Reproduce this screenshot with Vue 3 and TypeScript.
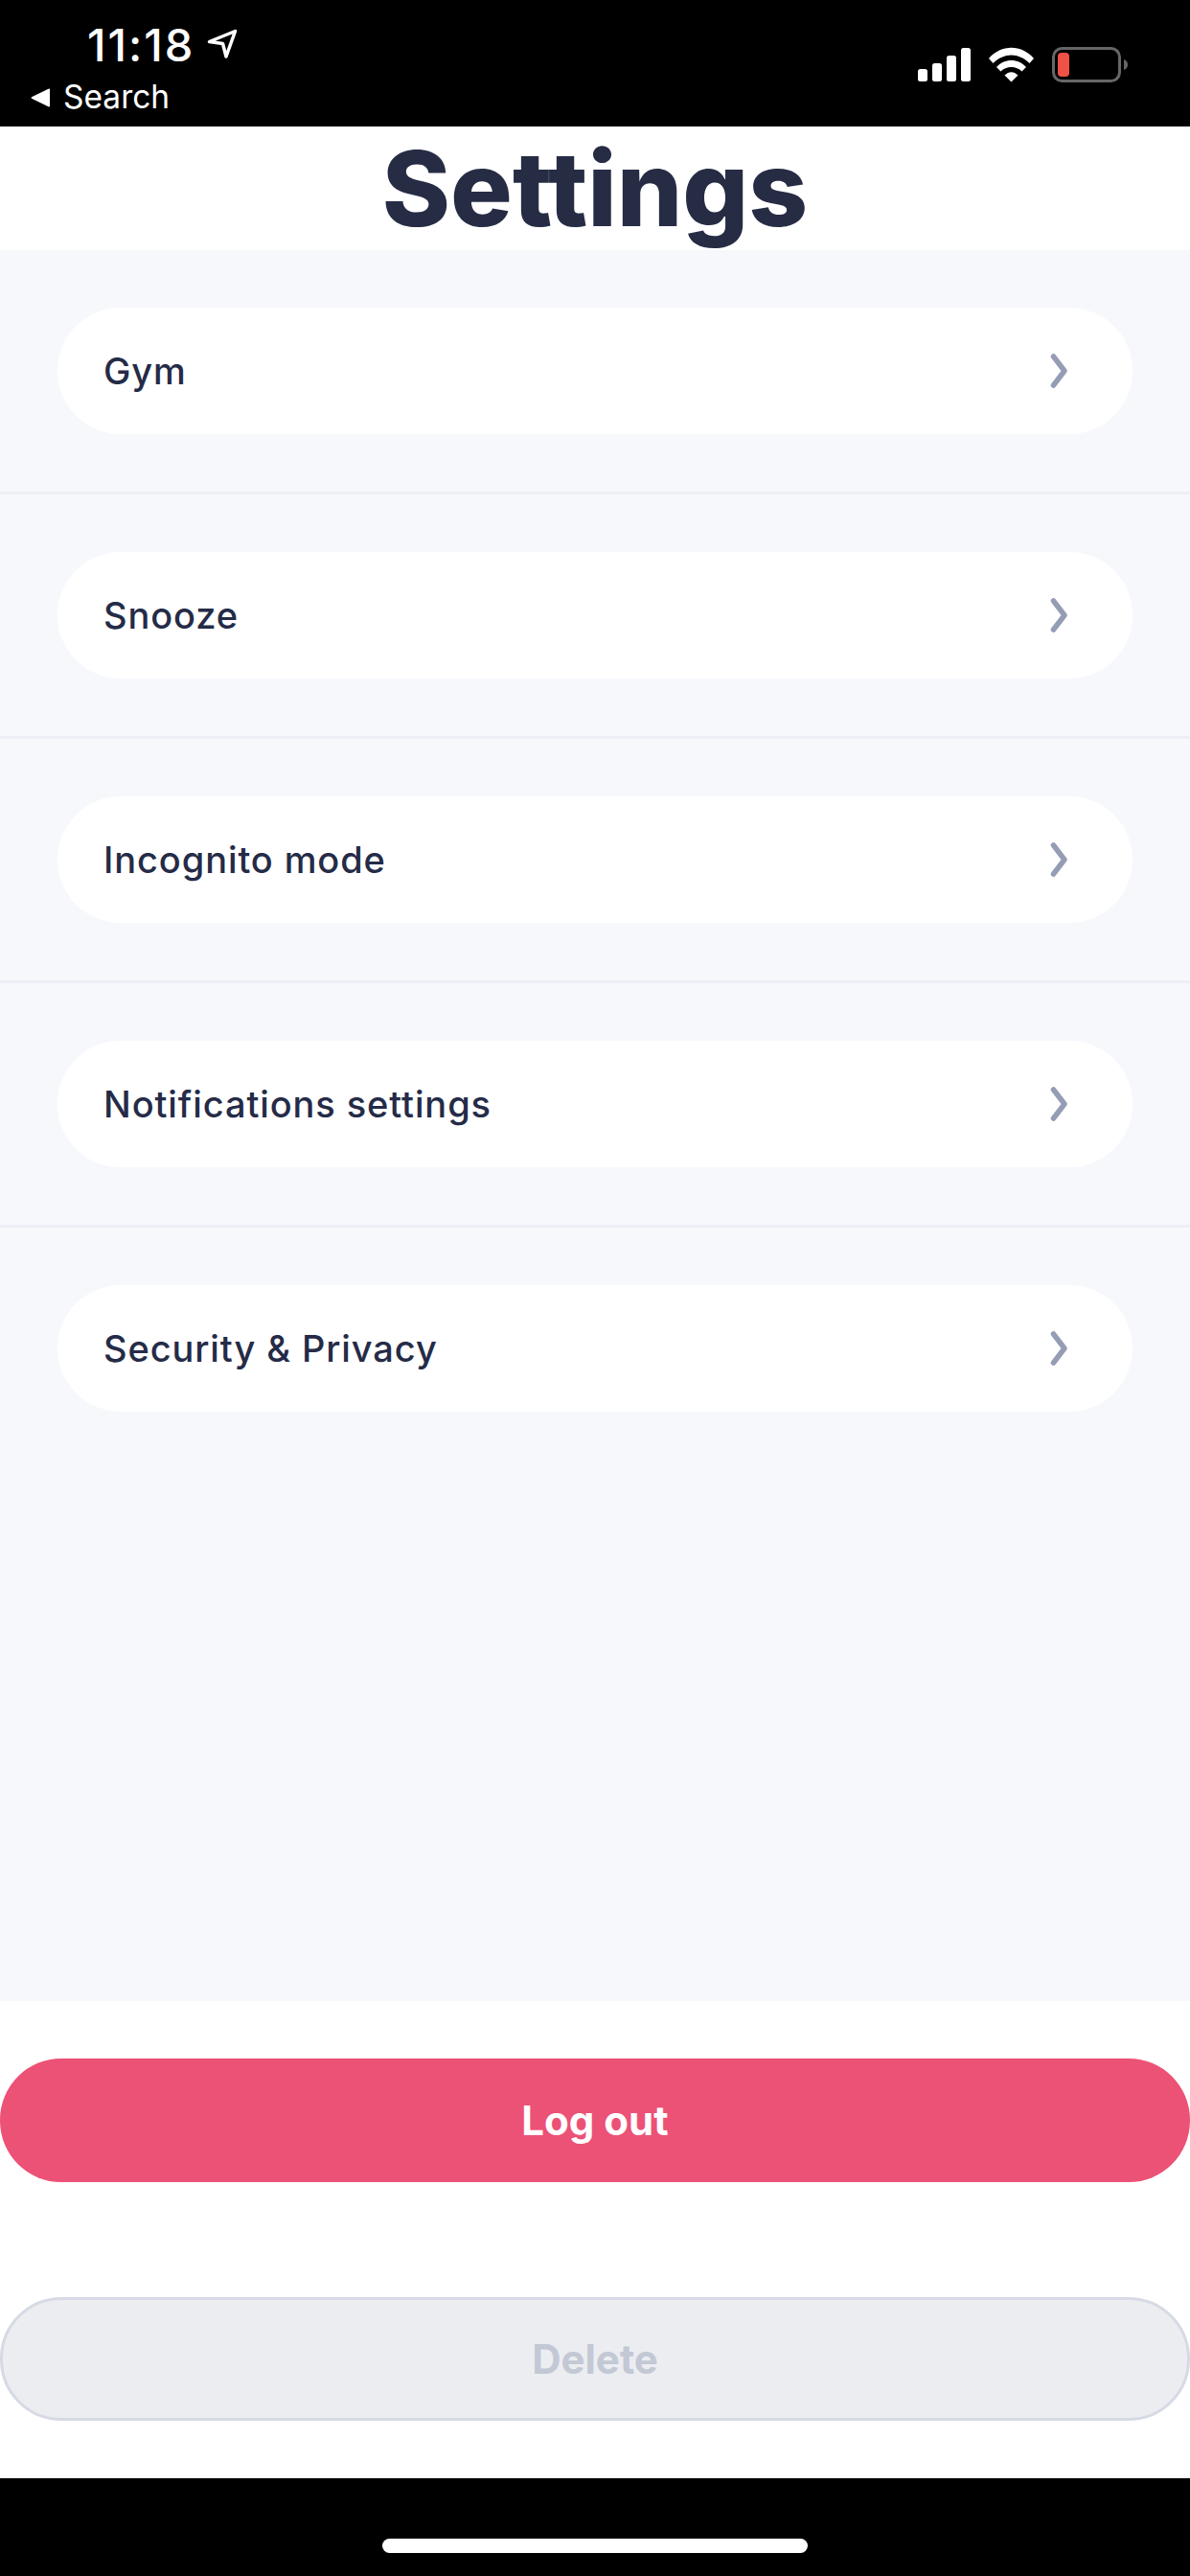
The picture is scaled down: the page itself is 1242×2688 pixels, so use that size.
<template>
	<div class="screen">
		<div class="status-bar">
			<div class="status-left">
				<div class="time-row">
					<span class="time">11:18</span>
					<svg class="location" width="32" height="32" viewBox="0 0 32 32">
						<path d="M29.500 2.500 L2.500 13.500 L16.500 15.500 L20 29 Z" fill="none" stroke="#fff" stroke-width="3.500" stroke-linejoin="round" />
					</svg>
				</div>
				<div class="back-row">
					<svg width="21" height="20" viewBox="0 0 21 20">
						<path d="M20 1.500 V18.500 Q20 20 18.500 19.200 L1 10.800 Q0 10 1 9.200 L18.500 .8 Q20 0 20 1.500 Z" fill="#fff" />
					</svg>
					<span>Search</span>
				</div>
			</div>
			<svg class="status-right" width="220" height="38" viewBox="0 0 220 38">
				<rect x="0" y="23" width="10" height="13" rx="2.500" fill="#fff" />
				<rect x="15" y="17" width="10" height="19" rx="2.500" fill="#fff" />
				<rect x="30" y="9" width="10" height="27" rx="2.500" fill="#fff" />
				<rect x="45" y="1" width="10" height="35" rx="2.500" fill="#fff" />
				<path d="M74 12 C87 -3 108 -3 121 12 L116.500 17 C105 5.500 90 5.500 78.500 17 Z" fill="#fff" />
				<path d="M82 21 C90 11.500 105 11.500 113 21 L108.500 25.500 C103 19.500 92 19.500 86.500 25.500 Z" fill="#fff" />
				<path d="M90.500 29.500 C95 25 100 25 104.500 29.500 L97.500 36.500 Z" fill="#fff" />
				<rect x="141.500" y="1.500" width="69" height="34" rx="9" fill="none" stroke="#666" stroke-width="3" />
				<rect x="146" y="6" width="12" height="25" rx="4" fill="#ee5246" />
				<path d="M215 13 C218 14 219 16 219 18.500 C219 21 218 23 215 24 Z" fill="#666" />
			</svg>
		</div>

		<header class="page-header">
			<h1>Settings</h1>
		</header>

		<main class="settings-list">
			<div v-for="item in items" :key="item" class="settings-row">
				<div class="settings-item">
					<span>{{ item }}</span>
					<svg width="18" height="36" viewBox="0 0 18 36">
						<path d="M3.500 3 L15 18 L3.500 33" fill="none" stroke="#959db5" stroke-width="5.500" stroke-linecap="round" stroke-linejoin="round" />
					</svg>
				</div>
			</div>
		</main>

		<div class="actions">
			<button class="btn btn-logout">Log out</button>
			<button class="btn btn-delete">Delete</button>
		</div>

		<div class="home-area">
			<div class="home-bar"></div>
		</div>
	</div>
</template>

<script setup lang="ts">
const items: string[] = [
	'Gym',
	'Snooze',
	'Incognito mode',
	'Notifications settings',
	'Security & Privacy',
];
</script>

<style scoped>
.screen {
	width: 1242px;
	height: 2688px;
	display: flex;
	flex-direction: column;
	background-color: #fff;
	font-family: Inter, "Liberation Sans", sans-serif;
	overflow: hidden;
}

.status-bar {
	height: 132px;
	flex-shrink: 0;
	background-color: #000;
	color: #fff;
	display: flex;
	justify-content: space-between;
	box-sizing: border-box;
	padding: 0 64px 0 32px;
}

.status-left {
	display: flex;
	flex-direction: column;
}

.time-row {
	display: flex;
	align-items: center;
	height: 80px;
	padding: 12px 0 0 59px;
	box-sizing: border-box;
}

.time {
	font-size: 47px;
	font-weight: 500;
	letter-spacing: 2px;
	line-height: 1;
}

.location {
	margin-left: 13px;
}

.back-row {
	display: flex;
	align-items: center;
	gap: 13px;
	font-size: 33.5px;
	line-height: 1;
	height: 44px;
}

.status-right {
	margin-top: 49px;
}

.page-header {
	height: 129px;
	flex-shrink: 0;
	display: flex;
	align-items: center;
	justify-content: center;
}

.page-header h1 {
	margin: 0;
	font-size: 108px;
	font-weight: 800;
	line-height: 1;
	color: #272c45;
}

.settings-list {
	flex: 1;
	background-color: #f6f8fc;
}

.settings-row {
	padding: 60px;
	border-bottom: 3px solid #eeeff6;
}

.settings-row:last-child {
	border-bottom: none;
}

.settings-item {
	height: 132px;
	box-sizing: border-box;
	padding: 0 68px 0 48px;
	border-radius: 66px;
	background-color: #fff;
	display: flex;
	align-items: center;
	justify-content: space-between;
	font-size: 38px;
	font-weight: 500;
	letter-spacing: 0.9px;
	color: #252b47;
}

.actions {
	flex-shrink: 0;
	display: flex;
	flex-direction: column;
	gap: 120px;
	padding: 60px 0;
}

.btn {
	height: 129px;
	width: 100%;
	box-sizing: border-box;
	border-radius: 64px;
	font-family: inherit;
	font-size: 42px;
	font-weight: 700;
	padding: 0;
}

.btn-logout {
	background-color: #ec5176;
	border: none;
	color: #fff;
}

.btn-delete {
	background-color: #ecedf1;
	border: 3px solid #d6dae4;
	color: #c3c8d5;
}

.home-area {
	height: 102px;
	flex-shrink: 0;
	background-color: #000;
	display: flex;
	justify-content: center;
	padding-top: 63px;
	box-sizing: border-box;
}

.home-bar {
	width: 444px;
	height: 15px;
	border-radius: 8px;
	background-color: #fff;
}
</style>
